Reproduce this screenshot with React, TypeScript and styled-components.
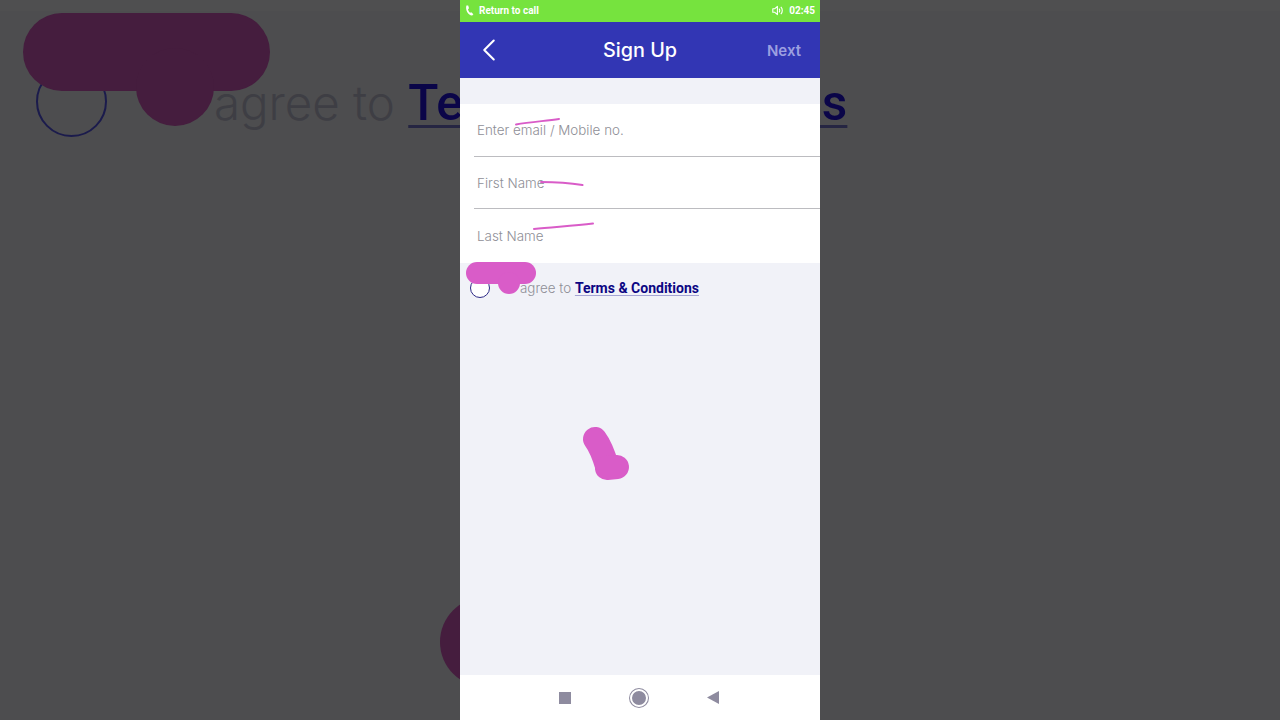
import React from "react";
import styled, { createGlobalStyle } from "styled-components";
import { ChevronLeft } from "lucide-react";

const GlobalStyle = createGlobalStyle`
  html, body {
    margin: 0;
    padding: 0;
    height: 100%;
    overflow: hidden;
    background: #4d4d4f;
  }
  * {
    box-sizing: border-box;
  }
`;

// enlarged, dimmed copy of the screen that sits behind the phone
function BackdropCopy() {
  return (
    <Backdrop>
      <BackdropTopBand />
      <BackdropRing />
      <BackdropPill />
      <BackdropDot />
      <BackdropStrokeDot />
      <BackdropText>
        agree to <BackdropLink>Terms &amp; Conditions</BackdropLink>
      </BackdropText>
    </Backdrop>
  );
}

function StatusBar() {
  return (
    <Status>
      <StatusGroup>
        <svg width="9" height="11" viewBox="0 0 9 11">
          <path
            d="M1.4 0.6 L3.2 0.4 L4 3.2 L3 4.2 C3.3 5.5 4 6.8 5 7.7 L6.3 7.2 L8.4 9.2 L7.2 10.5 C3.6 10.8 0 5.5 1.4 0.6 Z"
            fill="#ffffff"
          />
        </svg>
        <StatusLabel>Return to call</StatusLabel>
      </StatusGroup>
      <StatusGroup>
        <svg width="12" height="11" viewBox="0 0 12 11" fill="none">
          <path
            d="M0.8 3.8 H2.6 L5.4 1.4 V9.6 L2.6 7.2 H0.8 Z"
            stroke="#ffffff"
            strokeWidth="1.1"
            strokeLinejoin="round"
          />
          <path d="M7 3.6 C8 4.6 8 6.4 7 7.4" stroke="#ffffff" strokeWidth="1.1" />
          <path d="M8.8 1.8 C10.8 3.8 10.8 7.2 8.8 9.2" stroke="#ffffff" strokeWidth="1.1" />
        </svg>
        <StatusTime>02:45</StatusTime>
      </StatusGroup>
    </Status>
  );
}

function Scribbles() {
  return (
    <ScribbleLayer viewBox="0 0 360 720">
      <g fill="none" stroke="#d95cc8" strokeLinecap="round" strokeLinejoin="round">
        <path d="M56 124.5 C70 122 85 121 99 119" strokeWidth="2" />
        <path d="M81 182 C95 182 110 183 122.5 185" strokeWidth="2" />
        <path d="M74 229 C92 227 112 226 133 223.5" strokeWidth="2" />
        <path d="M135 439 C141 447 144 456 147 466" strokeWidth="24" />
        <path d="M147 468 L157 467" strokeWidth="24" />
        <path d="M17 273 H65" strokeWidth="22" />
        <path d="M49 283 L49 283" strokeWidth="22" />
      </g>
    </ScribbleLayer>
  );
}

function App() {
  return (
    <Stage>
      <GlobalStyle />
      <BackdropCopy />
      <Phone>
        <StatusBar />
        <Header>
          <BackButton>
            <ChevronLeft size={38} strokeWidth={1.3} color="#ffffff" />
          </BackButton>
          <Title>Sign Up</Title>
          <NextLabel>Next</NextLabel>
        </Header>
        <Content>
          <FormCard>
            <Field placeholder="Enter email / Mobile no." />
            <Field placeholder="First Name" $pad="2px" />
            <Field placeholder="Last Name" $last />
          </FormCard>
          <AgreeRow>
            <Radio />
            <AgreeText>
              agree to <TermsLink>Terms &amp; Conditions</TermsLink>
            </AgreeText>
          </AgreeRow>
        </Content>
        <NavBar>
          <NavSquare />
          <NavCircle />
          <NavBack />
        </NavBar>
        <Scribbles />
      </Phone>
    </Stage>
  );
}

export default App;

const Stage = styled.div`
  position: relative;
  width: 100%;
  height: 720px;
  display: flex;
  justify-content: center;
  overflow: hidden;
`;

const Backdrop = styled.div`
  position: absolute;
  inset: 0;
  background: #4d4d4f;
  overflow: hidden;
`;

const BackdropTopBand = styled.div`
  position: absolute;
  left: 0;
  right: 0;
  top: 0;
  height: 11px;
  background: #4f4f50;
`;

const BackdropRing = styled.div`
  position: absolute;
  left: 36px;
  top: 66px;
  width: 71px;
  height: 71px;
  border: 2px solid #1b1b4c;
  border-radius: 50%;
`;

const BackdropPill = styled.div`
  position: absolute;
  left: 23px;
  top: 13px;
  width: 247px;
  height: 78px;
  border-radius: 39px;
  background: #451d3e;
`;

const BackdropDot = styled.div`
  position: absolute;
  left: 136px;
  top: 48px;
  width: 78px;
  height: 78px;
  border-radius: 50%;
  background: #451d3e;
`;

const BackdropStrokeDot = styled.div`
  position: absolute;
  left: 440px;
  top: 597px;
  width: 90px;
  height: 90px;
  border-radius: 50%;
  background: #451d3e;
`;

const BackdropText = styled.div`
  position: absolute;
  left: 214px;
  top: 73px;
  font-family: Inter, "Liberation Sans", sans-serif;
  font-size: 47.4px;
  line-height: 60px;
  font-weight: 300;
  color: #3e3e44;
  white-space: nowrap;
`;

const BackdropLink = styled.span`
  font-family: Roboto, "Liberation Sans", sans-serif;
  font-size: 49.5px;
  font-weight: 500;
  letter-spacing: 0.2px;
  color: #0a0548;
  text-decoration: underline;
  text-decoration-color: #252542;
  text-decoration-thickness: 3px;
  text-underline-offset: 5px;
`;

const Phone = styled.div`
  position: relative;
  width: 360px;
  height: 720px;
  display: flex;
  flex-direction: column;
  background: #f1f2f8;
`;

const Status = styled.div`
  height: 22px;
  padding: 0 5px 1px;
  display: flex;
  align-items: center;
  justify-content: space-between;
  background: #76e33e;
  color: #ffffff;
  font-family: Roboto, "Liberation Sans", sans-serif;
  font-size: 10px;
  font-weight: 700;
`;

const StatusGroup = styled.div`
  display: flex;
  align-items: center;
  gap: 5px;
`;

const StatusLabel = styled.span`
  font-size: 10px;
`;

const StatusTime = styled.span`
  font-size: 10px;
`;

const Header = styled.div`
  height: 56px;
  padding: 0 19px;
  display: grid;
  grid-template-columns: 1fr auto 1fr;
  align-items: center;
  background: #3236b4;
  font-family: Inter, "Liberation Sans", sans-serif;
`;

const BackButton = styled.div`
  display: flex;
  height: 38px;
  margin-left: -9px;
`;

const Title = styled.div`
  font-size: 19.8px;
  font-weight: 500;
  color: #ffffff;
`;

const NextLabel = styled.div`
  justify-self: end;
  font-size: 15px;
  font-weight: 600;
  color: #9c9fe0;
`;

const Content = styled.div`
  flex: 1;
  padding-top: 26px;
`;

const FormCard = styled.div`
  background: #ffffff;
  height: 158.5px;
  padding-left: 14px;
  display: flex;
  flex-direction: column;
`;

const Field = styled.input<{ $last?: boolean; $pad?: string }>`
  height: ${(p) => (p.$last ? "53px" : "52.5px")};
  width: 100%;
  padding: ${(p) => (p.$last ? "0 0 0 3px" : `${p.$pad || "0"} 0 0 3px`)};
  border: 0;
  border-bottom: ${(p) => (p.$last ? "0" : "1px solid #bcbcc0")};
  background: transparent;
  outline: none;
  font-family: Inter, "Liberation Sans", sans-serif;
  font-size: 13.4px;
  font-weight: 300;

  &::placeholder {
    color: #8f8f97;
    opacity: 1;
  }
`;

const AgreeRow = styled.div`
  padding: 15px 0 0 10px;
  display: flex;
  align-items: center;
`;

const Radio = styled.div`
  width: 20px;
  height: 20px;
  border: 1px solid #2d2a86;
  border-radius: 50%;
  background: #ffffff;
`;

const AgreeText = styled.div`
  margin-left: 30px;
  font-family: Inter, "Liberation Sans", sans-serif;
  font-size: 13.4px;
  font-weight: 300;
  color: #8f8f97;
  white-space: nowrap;
`;

const TermsLink = styled.span`
  font-family: Roboto, "Liberation Sans", sans-serif;
  font-size: 14px;
  font-weight: 700;
  color: #0c0683;
  text-decoration: underline;
  text-decoration-color: #a5a5d4;
  text-underline-offset: 2px;
`;

const NavBar = styled.div`
  height: 45px;
  padding: 0 101px 0 99px;
  display: flex;
  align-items: center;
  justify-content: space-between;
  background: #ffffff;
`;

const NavSquare = styled.div`
  width: 12px;
  height: 12px;
  background: #8e8b9f;
`;

const NavCircle = styled.div`
  width: 18px;
  height: 18px;
  border-radius: 50%;
  background: #8e8b9f;
  border: 2px solid #ffffff;
  box-shadow: 0 0 0 1px #8e8b9f;
`;

const NavBack = styled.div`
  width: 12px;
  height: 13px;
  background: #8e8b9f;
  clip-path: polygon(100% 0, 100% 100%, 0 50%);
`;

const ScribbleLayer = styled.svg`
  position: absolute;
  left: 0;
  top: 0;
  width: 360px;
  height: 720px;
  pointer-events: none;
`;
